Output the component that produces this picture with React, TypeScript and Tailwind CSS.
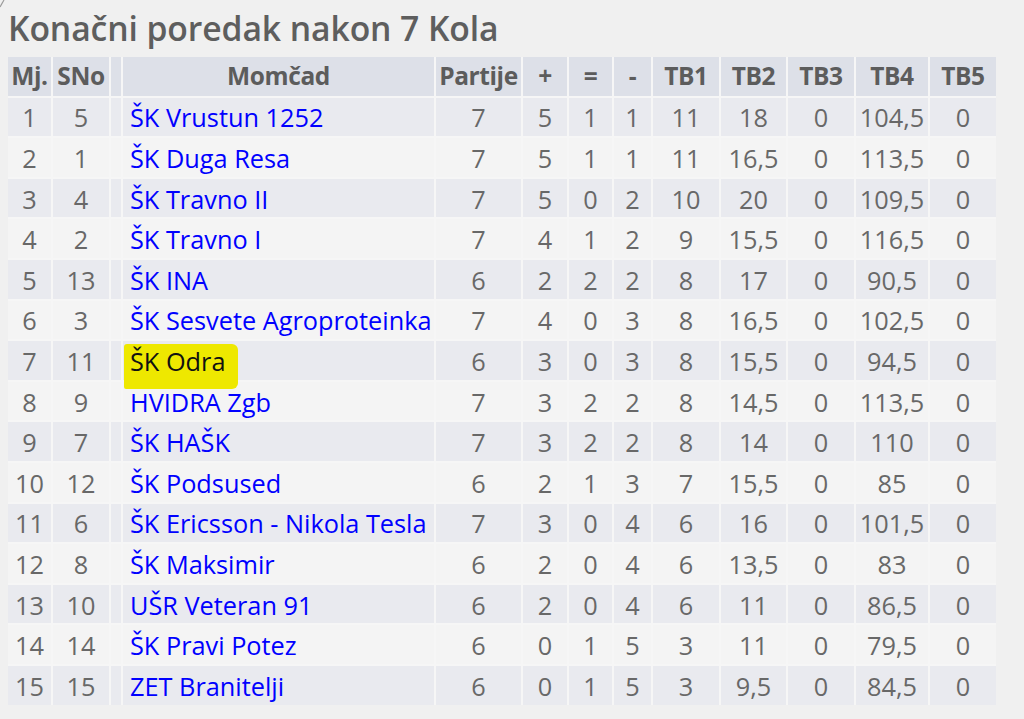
import React from "react";

type Row = [number, number, string, number, number, number, number, number, string, number, string, number];

const rows: Row[] = [
  [1, 5, "ŠK Vrustun 1252", 7, 5, 1, 1, 11, "18", 0, "104,5", 0],
  [2, 1, "ŠK Duga Resa", 7, 5, 1, 1, 11, "16,5", 0, "113,5", 0],
  [3, 4, "ŠK Travno II", 7, 5, 0, 2, 10, "20", 0, "109,5", 0],
  [4, 2, "ŠK Travno I", 7, 4, 1, 2, 9, "15,5", 0, "116,5", 0],
  [5, 13, "ŠK INA", 6, 2, 2, 2, 8, "17", 0, "90,5", 0],
  [6, 3, "ŠK Sesvete Agroproteinka", 7, 4, 0, 3, 8, "16,5", 0, "102,5", 0],
  [7, 11, "ŠK Odra", 6, 3, 0, 3, 8, "15,5", 0, "94,5", 0],
  [8, 9, "HVIDRA Zgb", 7, 3, 2, 2, 8, "14,5", 0, "113,5", 0],
  [9, 7, "ŠK HAŠK", 7, 3, 2, 2, 8, "14", 0, "110", 0],
  [10, 12, "ŠK Podsused", 6, 2, 1, 3, 7, "15,5", 0, "85", 0],
  [11, 6, "ŠK Ericsson - Nikola Tesla", 7, 3, 0, 4, 6, "16", 0, "101,5", 0],
  [12, 8, "ŠK Maksimir", 6, 2, 0, 4, 6, "13,5", 0, "83", 0],
  [13, 10, "UŠR Veteran 91", 6, 2, 0, 4, 6, "11", 0, "86,5", 0],
  [14, 14, "ŠK Pravi Potez", 6, 0, 1, 5, 3, "11", 0, "79,5", 0],
  [15, 15, "ZET Branitelji", 6, 0, 1, 5, 3, "9,5", 0, "84,5", 0],
];

const headers = ["Mj.", "SNo", "", "Momčad", "Partije", "+", "=", "-", "TB1", "TB2", "TB3", "TB4", "TB5"];

export default function App() {
  return (
    <div
      className="relative w-[1024px] h-[719px] bg-[#f0f0f0] overflow-hidden"
      style={{ fontFamily: '"Open Sans", "Noto Sans", sans-serif' }}
    >
      <svg className="absolute left-0 top-0" width="6" height="8" viewBox="0 0 6 8">
        <line x1="0" y1="7" x2="4" y2="0" stroke="#9a9a9a" strokeWidth="1.2" />
      </svg>
      <div className="pl-[8px] pt-[6px]">
        <h1 className="text-[33.7px] leading-[44px] font-semibold text-[#5e5e5e] tracking-[-0.1px] whitespace-nowrap">
          Konačni poredak nakon 7 Kola
        </h1>
        <div className="mt-[7px] inline-grid grid-cols-[43px_56px_10px_311px_85px_44px_43px_37px_66px_65px_66px_72px_66px] auto-rows-[38.6px] gap-[2px] bg-[#f6f6f6]">
          {headers.map((h, i) => (
            <div
              key={i}
              className="bg-[#dde0e8] flex items-center justify-center text-[24.5px] font-bold text-[#5c5c5c] tracking-[-0.4px] whitespace-nowrap"
            >
              {h}
            </div>
          ))}
          {rows.map((r, ri) => {
            const bg = ri % 2 === 0 ? "bg-[#e9eaef]" : "bg-[#f4f4f4]";
            const cells: React.ReactNode[] = [];
            r.forEach((v, ci) => {
              if (ci === 2) {
                cells.push(<div key="sp" className={bg} />);
                const isOdra = v === "ŠK Odra";
                cells.push(
                  <div key={ci} className={`${bg} relative flex items-center pl-[7px] pt-[3px] text-[25.3px] whitespace-nowrap`}>
                    {isOdra && (
                      <div className="absolute z-10 left-[1px] top-[3px] w-[114px] h-[45px] bg-[#eee800] rounded-[3px_6px_6px_2px]" />
                    )}
                    <span className={`relative z-20 ${isOdra ? "text-[#111]" : "text-[#0000ff]"}`}>{v}</span>
                  </div>
                );
              } else {
                cells.push(
                  <div key={ci} className={`${bg} flex items-center justify-center pt-[3px] text-[25.3px] text-[#686868] whitespace-nowrap`}>
                    {v}
                  </div>
                );
              }
            });
            return <React.Fragment key={ri}>{cells}</React.Fragment>;
          })}
        </div>
      </div>
    </div>
  );
}
